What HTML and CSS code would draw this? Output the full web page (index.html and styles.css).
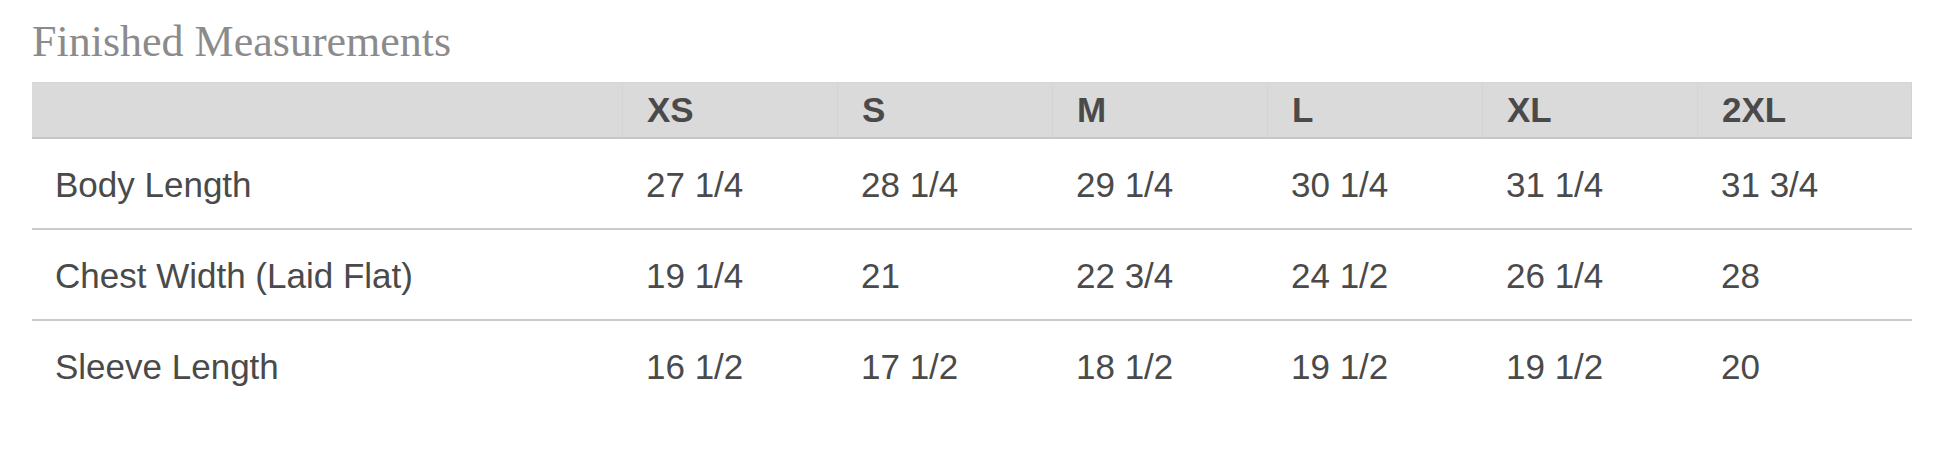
FILE: index.html
```html
<!DOCTYPE html>
<html lang="en">
<head>
<meta charset="utf-8">
<title>Finished Measurements</title>
<link rel="stylesheet" href="styles.css">
</head>
<body>
<section class="measure">
  <h2 class="measure-title">Finished Measurements</h2>
  <div class="chart">
    <div class="row head">
      <div class="cell"></div>
      <div class="cell">XS</div>
      <div class="cell">S</div>
      <div class="cell">M</div>
      <div class="cell">L</div>
      <div class="cell">XL</div>
      <div class="cell">2XL</div>
    </div>
    <div class="row">
      <div class="cell">Body Length</div>
      <div class="cell">27 1/4</div>
      <div class="cell">28 1/4</div>
      <div class="cell">29 1/4</div>
      <div class="cell">30 1/4</div>
      <div class="cell">31 1/4</div>
      <div class="cell">31 3/4</div>
    </div>
    <div class="row">
      <div class="cell">Chest Width (Laid Flat)</div>
      <div class="cell">19 1/4</div>
      <div class="cell">21</div>
      <div class="cell">22 3/4</div>
      <div class="cell">24 1/2</div>
      <div class="cell">26 1/4</div>
      <div class="cell">28</div>
    </div>
    <div class="row last">
      <div class="cell">Sleeve Length</div>
      <div class="cell">16 1/2</div>
      <div class="cell">17 1/2</div>
      <div class="cell">18 1/2</div>
      <div class="cell">19 1/2</div>
      <div class="cell">19 1/2</div>
      <div class="cell">20</div>
    </div>
  </div>
</section>
</body>
</html>
```
FILE: styles.css
```css
* { box-sizing: border-box; }

html, body {
  margin: 0;
  padding: 0;
  background: #ffffff;
}

.measure {
  padding: 17px 34px 0 32px;
  font-family: "Liberation Sans", Arial, sans-serif;
  color: #4a4a4a;
}

.measure-title {
  margin: 0 0 15px 0;
  font-family: "Liberation Serif", "Times New Roman", serif;
  font-weight: normal;
  font-size: 44px;
  line-height: 50px;
  color: #8b8b8b;
}

.chart {
  width: 100%;
}

.row {
  display: grid;
  grid-template-columns: 590px repeat(6, 1fr);
  height: 91px;
  border-bottom: 2px solid #cacaca;
  font-size: 35px;
}

.row.last {
  border-bottom: none;
  height: 90px;
}

.cell {
  display: flex;
  align-items: center;
  padding: 2px 24px 0 24px;
  white-space: nowrap;
}

.cell:first-child {
  padding-left: 23px;
}

.row.head {
  height: 57px;
  background: #dadada;
  border-top: 1px solid #d6d6d6;
  border-bottom: 2px solid #c6c6c6;
  font-weight: bold;
  color: #4a4a4a;
}

.row.head .cell {
  padding-top: 0;
}

.row.head .cell + .cell {
  border-left: 1px solid #d4d4d4;
}

.row.head .cell:last-child {
  border-right: 1px solid #d4d4d4;
}
```
